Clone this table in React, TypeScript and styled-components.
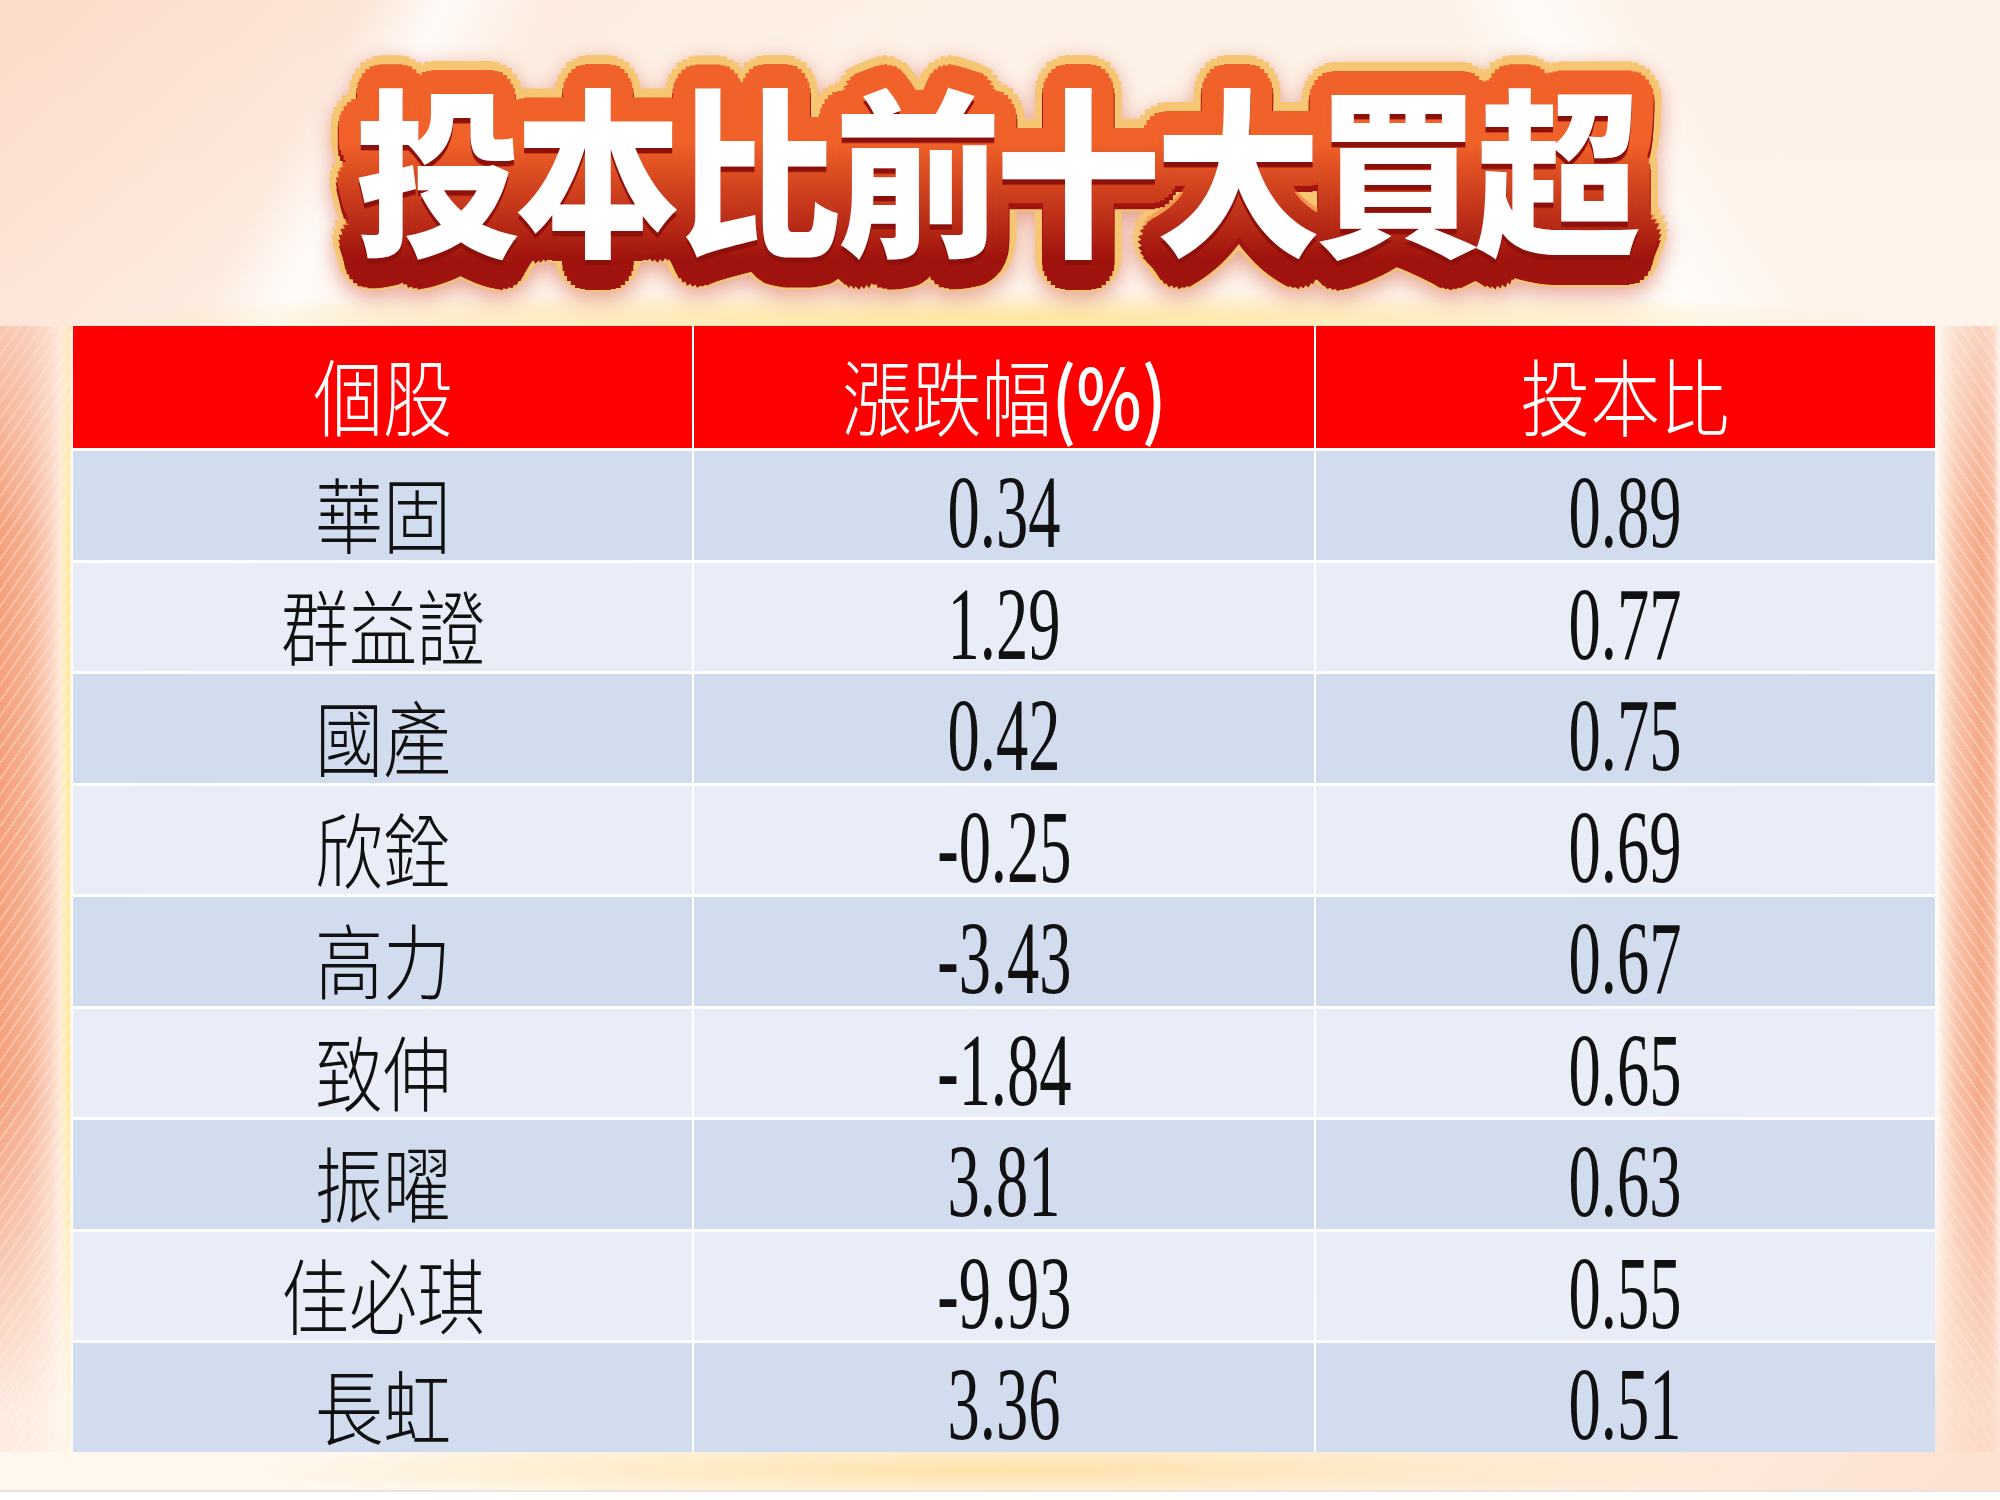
import React from "react";
import styled, { createGlobalStyle } from "styled-components";

const Global = createGlobalStyle`
  html, body { margin: 0; padding: 0; background: #ffffff; }
  #root { width: 2000px; height: 1500px; }
`;

const ring = (r: number, color: string, n = 28) =>
  Array.from({ length: n }, (_, i) => {
    const a = (2 * Math.PI * i) / n;
    return `${(r * Math.cos(a)).toFixed(1)}px ${(r * Math.sin(a)).toFixed(1)}px 0 ${color}`;
  }).join(", ");

const rings = (rs: number[], color: string) => rs.map((r) => ring(r, color)).join(", ");

const GOLD_SHADOW = rings([6, 12, 18, 24, 30], "#f6c673");
const DARK_SHADOW = rings([6, 12, 18, 23], "#a0140f");
const ORANGE_SHADOW = rings([6, 12, 18, 22], "#f0622a");

const Page = styled.div`
  width: 2000px;
  height: 1500px;
  display: flex;
  flex-direction: column;
  overflow: hidden;
  background:
    radial-gradient(ellipse 900px 28px at 50% 318px, rgba(255,226,140,0.8), rgba(255,226,140,0) 100%),
    radial-gradient(ellipse 760px 36px at 50% 1470px, rgba(255,212,125,0.6), rgba(255,212,125,0) 100%),
    linear-gradient(118deg, rgba(255,255,255,0) 0%, rgba(255,255,255,0) 13%, rgba(255,255,255,0.8) 16%, rgba(255,255,255,0) 20%, rgba(255,255,255,0) 100%),
    linear-gradient(62deg, rgba(255,255,255,0) 0%, rgba(255,255,255,0) 80%, rgba(255,255,255,0.75) 83%, rgba(255,255,255,0) 87%),
    linear-gradient(135deg, rgba(250,200,175,0.55) 0%, rgba(253,232,218,0.25) 20%, rgba(255,255,255,0) 34%, rgba(255,255,255,0) 66%, rgba(253,232,218,0.25) 80%, rgba(250,200,175,0.5) 100%),
    linear-gradient(180deg, #fdf1e7 0px, #fef4ec 320px, #fff7f0 1300px, #fff8ef 1490px, #ffffff 1490px);
`;

const TitleArea = styled.div`
  height: 326px;
  display: flex;
  align-items: center;
  justify-content: center;
  padding-right: 10px;
`;

/* Back layers (gold rim and dark-red extrusion) are drawn by pseudo-elements from data-text. */
const TitleStack = styled.h1`
  margin: 2px 0 0;
  display: grid;
  font-family: "Noto Sans CJK TC", "Noto Sans CJK SC", sans-serif;
  font-weight: 900;
  font-size: 166px;
  line-height: 1;
  letter-spacing: -6px;
  transform: scaleY(1.08);

  &::before,
  &::after {
    content: attr(data-text);
    grid-area: 1 / 1;
    white-space: nowrap;
    padding: 40px;
  }
  &::before {
    z-index: 0;
    color: #f6c673;
    text-shadow: ${GOLD_SHADOW};
    filter: drop-shadow(0 6px 10px rgba(200, 60, 30, 0.45));
  }
  &::after {
    z-index: 1;
    color: #a0140f;
    text-shadow: ${DARK_SHADOW};
    transform: translateY(5px);
  }
`;

const TitleFront = styled.span`
  grid-area: 1 / 1;
  z-index: 2;
  display: grid;

  &::before {
    content: attr(data-text);
    grid-area: 1 / 1;
    white-space: nowrap;
    padding: 40px;
    color: #f0622a;
    text-shadow: ${ORANGE_SHADOW};
    -webkit-mask-image: linear-gradient(180deg, #000 0%, #000 42%, rgba(0,0,0,0.55) 62%, rgba(0,0,0,0) 86%);
    mask-image: linear-gradient(180deg, #000 0%, #000 42%, rgba(0,0,0,0.55) 62%, rgba(0,0,0,0) 86%);
    -webkit-mask-repeat: no-repeat;
    mask-repeat: no-repeat;
  }
`;

const TitleText = styled.span`
  grid-area: 1 / 1;
  z-index: 1;
  white-space: nowrap;
  padding: 40px;
  color: #ffffff;
  filter: drop-shadow(0 5px 0 #8e100b);
`;

const Middle = styled.div`
  display: flex;
  height: 1126px;
`;

const SideStrip = styled.div<{ $side: "left" | "right" }>`
  width: ${(p) => (p.$side === "left" ? "73px" : "65px")};
  flex: none;
  background:
    repeating-linear-gradient(${(p) => (p.$side === "left" ? "125deg" : "55deg")},
      rgba(255,255,255,0) 0px, rgba(255,255,255,0) 7px, rgba(255,255,255,0.3) 7px, rgba(255,255,255,0.3) 9px),
    ${(p) =>
      p.$side === "left"
        ? "linear-gradient(to right, #f5a07c 0px, #f7b092 28px, #fbd0bb 50px, #fde8d8 60px, #ffeeb0 66px, #ffe59a 69px, #ffffff 72px)"
        : "linear-gradient(to right, #ffffff 0px, #fde6d8 8px, #f9c3a8 22px, #f6a887 45px, #f8b99c 58px, #fff3ee 65px)"};
  -webkit-mask-image: linear-gradient(180deg, rgba(0,0,0,0.45) 0%, #000 18%, #000 68%, rgba(0,0,0,0.15) 96%);
  mask-image: linear-gradient(180deg, rgba(0,0,0,0.45) 0%, #000 18%, #000 68%, rgba(0,0,0,0.15) 96%);
`;

const Table = styled.div`
  width: 1862px;
  flex: none;
  display: grid;
  grid-template-columns: repeat(3, 1fr);
  grid-template-rows: 122px repeat(9, 108.5px);
  column-gap: 2px;
  row-gap: 3px;
  background: rgba(255, 255, 255, 0.92);
`;

const Cell = styled.div<{ $variant: "head" | "dark" | "light" }>`
  display: flex;
  align-items: center;
  justify-content: center;
  padding-top: 14px;
  box-sizing: border-box;
  background: ${(p) =>
    p.$variant === "head" ? "#fe0000" : p.$variant === "dark" ? "#d1dcee" : "#e9edf7"};
  color: ${(p) => (p.$variant === "head" ? "#ffffff" : "#111111")};
`;

const CjkText = styled.span<{ $head?: boolean }>`
  display: inline-block;
  font-family: "Noto Sans CJK TC", "Noto Sans CJK SC", sans-serif;
  font-weight: 300;
  font-size: ${(p) => (p.$head ? "84px" : "82px")};
  line-height: 1.1;
  transform: scaleX(0.83);
  white-space: nowrap;
`;

const Pct = styled.span`
  font-weight: 500;
`;

const NumText = styled.span`
  display: inline-block;
  font-family: "Liberation Serif", "Times New Roman", serif;
  font-size: 104px;
  line-height: 1.1;
  transform: scaleX(0.62);
  white-space: nowrap;
`;

const BottomGlow = styled.div`
  flex: 1;
`;

const Footer = styled.div`
  height: 8px;
  border-top: 2px solid #e6e3e1;
  background: #ffffff;
`;

const rows: [string, string, string][] = [
  ["華固", "0.34", "0.89"],
  ["群益證", "1.29", "0.77"],
  ["國產", "0.42", "0.75"],
  ["欣銓", "-0.25", "0.69"],
  ["高力", "-3.43", "0.67"],
  ["致伸", "-1.84", "0.65"],
  ["振曜", "3.81", "0.63"],
  ["佳必琪", "-9.93", "0.55"],
  ["長虹", "3.36", "0.51"],
];

const TITLE = "投本比前十大買超";

export default function App() {
  return (
    <>
      <Global />
      <Page>
        <TitleArea>
          <TitleStack data-text={TITLE}>
            <TitleFront data-text={TITLE}>
              <TitleText>{TITLE}</TitleText>
            </TitleFront>
          </TitleStack>
        </TitleArea>
        <Middle>
          <SideStrip $side="left" />
          <Table>
            <Cell $variant="head">
              <CjkText $head>個股</CjkText>
            </Cell>
            <Cell $variant="head">
              <CjkText $head>
                漲跌幅<Pct>(%)</Pct>
              </CjkText>
            </Cell>
            <Cell $variant="head">
              <CjkText $head>投本比</CjkText>
            </Cell>
            {rows.map((r, i) => {
              const v = i % 2 === 0 ? "dark" : "light";
              return (
                <React.Fragment key={r[0]}>
                  <Cell $variant={v}>
                    <CjkText>{r[0]}</CjkText>
                  </Cell>
                  <Cell $variant={v}>
                    <NumText>{r[1]}</NumText>
                  </Cell>
                  <Cell $variant={v}>
                    <NumText>{r[2]}</NumText>
                  </Cell>
                </React.Fragment>
              );
            })}
          </Table>
          <SideStrip $side="right" />
        </Middle>
        <BottomGlow />
        <Footer />
      </Page>
    </>
  );
}
